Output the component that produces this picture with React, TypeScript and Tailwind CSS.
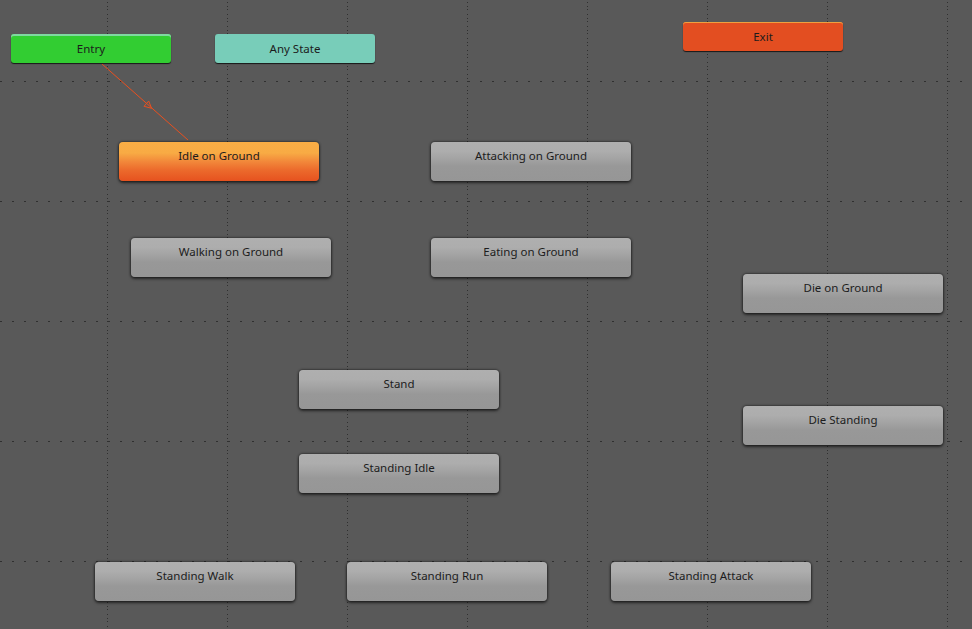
import React from "react";

type N = { label: string; x: number; y: number };

const grayNodes: N[] = [
  { label: "Attacking on Ground", x: 431, y: 142 },
  { label: "Walking on Ground", x: 131, y: 238 },
  { label: "Eating on Ground", x: 431, y: 238 },
  { label: "Die on Ground", x: 743, y: 274 },
  { label: "Stand", x: 299, y: 370 },
  { label: "Die Standing", x: 743, y: 406 },
  { label: "Standing Idle", x: 299, y: 454 },
  { label: "Standing Walk", x: 95, y: 562 },
  { label: "Standing Run", x: 347, y: 562 },
  { label: "Standing Attack", x: 611, y: 562 },
];

const vLines = [107, 227, 347, 467, 587, 707, 827, 947];
const hLines = [81, 201, 321, 441, 561];

function Grid() {
  const x1 = 102, y1 = 64, x2 = 188, y2 = 140;
  const mx = 149, my = 106;
  const len = Math.hypot(x2 - x1, y2 - y1);
  const ux = (x2 - x1) / len, uy = (y2 - y1) / len;
  const px = -uy, py = ux;
  const s = 3.5;
  const tip = `${mx + ux * s},${my + uy * s}`;
  const b1 = `${mx - ux * s + px * s},${my - uy * s + py * s}`;
  const b2 = `${mx - ux * s - px * s},${my - uy * s - py * s}`;
  return (
    <svg className="absolute inset-0" width={972} height={629} shapeRendering="crispEdges">
      {hLines.map((y) => (
        <line key={"h" + y} x1={0} x2={972} y1={y + 0.5} y2={y + 0.5} stroke="#303030" strokeWidth={1} strokeDasharray="2 10" />
      ))}
      {vLines.map((x) => (
        <line key={"v" + x} x1={x + 0.5} x2={x + 0.5} y1={0} y2={629} stroke="#303030" strokeWidth={1} strokeDasharray="1 3 1 2 1 4" strokeDashoffset={10} />
      ))}
      <g shapeRendering="auto">
        <line x1={x1} y1={y1} x2={x2} y2={y2} stroke="#e8501f" strokeWidth={1} />
        <polygon points={`${tip} ${b1} ${b2}`} fill="none" stroke="#e8501f" strokeWidth={1} />
      </g>
    </svg>
  );
}

function GrayNode({ n }: { n: N }) {
  return (
    <div
      className="absolute w-[200px] h-[39px] rounded-[4px] bg-[linear-gradient(to_bottom,#afafaf_0%,#adadad_24%,#a2a2a2_45%,#989898_62%,#969696_100%)] shadow-[0_0_2px_1px_rgba(0,0,0,0.35),0_2px_3px_rgba(0,0,0,0.5)] text-center pt-[6px] text-[11.5px] leading-[16px] text-[#1c1c1c]"
      style={{ left: n.x, top: n.y, fontFamily: '"Noto Sans", "DejaVu Sans", sans-serif' }}
    >
      {n.label}
    </div>
  );
}

export default function App() {
  const font = { fontFamily: '"Noto Sans", "DejaVu Sans", sans-serif' };
  return (
    <div className="relative w-[972px] h-[629px] overflow-hidden bg-[#595959]" style={font}>
      <Grid />

      {/* Entry */}
      <div className="absolute left-[11px] top-[34px] w-[160px] h-[29px] rounded-[3px] bg-[#32cd32] shadow-[inset_0_2px_0_#7fd8a0,0_1px_1px_rgba(0,0,0,0.75)] flex items-center justify-center text-[11.5px] text-[#1c1c1c]">
        Entry
      </div>

      {/* Any State */}
      <div className="absolute left-[215px] top-[34px] w-[160px] h-[29px] rounded-[3px] bg-[#78cdb9] shadow-[0_1px_1px_rgba(0,0,0,0.75)] flex items-center justify-center text-[11.5px] text-[#1c1c1c]">
        Any State
      </div>

      {/* Exit */}
      <div className="absolute left-[683px] top-[22px] w-[160px] h-[29px] rounded-[3px] bg-[#e34e21] shadow-[inset_0_1px_0_#f0a040,0_1px_1px_rgba(0,0,0,0.75)] flex items-center justify-center text-[11.5px] text-[#1c1c1c]">
        Exit
      </div>

      {/* Idle on Ground (default state) */}
      <div className="absolute left-[119px] top-[142px] w-[200px] h-[39px] rounded-[4px] bg-[linear-gradient(to_bottom,#f9ad45_0%,#f8ab44_28%,#f2883a_50%,#ec6a2c_72%,#e6521f_100%)] shadow-[0_0_2px_1px_rgba(0,0,0,0.35),0_2px_3px_rgba(0,0,0,0.5)] text-center pt-[6px] text-[11.5px] leading-[16px] text-[#1c1c1c]">
        Idle on Ground
      </div>

      {grayNodes.map((n) => (
        <GrayNode key={n.label} n={n} />
      ))}
    </div>
  );
}
